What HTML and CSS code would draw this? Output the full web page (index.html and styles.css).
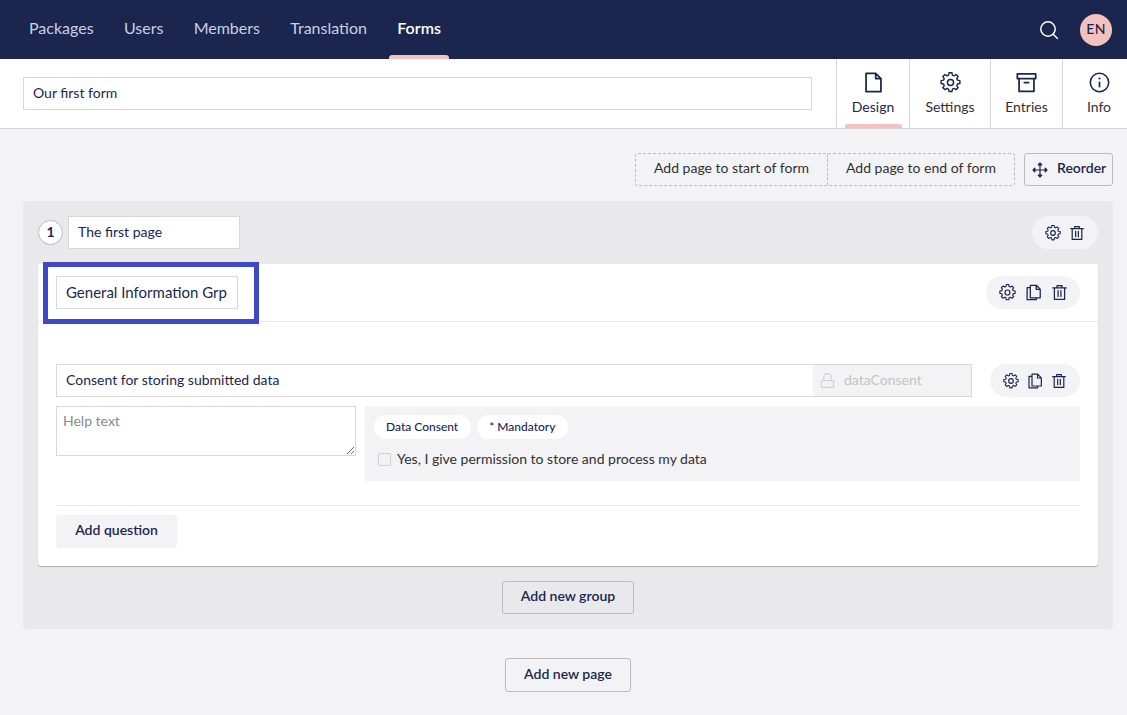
FILE: index.html
```html
<!DOCTYPE html>
<html lang="en">
<head>
<meta charset="utf-8">
<title>Forms</title>
<link rel="stylesheet" href="styles.css">
</head>
<body>
<svg class="defs" width="0" height="0" aria-hidden="true">
  <symbol id="gear" viewBox="0 0 24 24"><path fill="none" stroke="currentColor" stroke-width="1.7" stroke-linejoin="round" d="M10.300 1.800h3.400l.6 2.900 1.800.8 2.500-1.500 2.400 2.400-1.500 2.500.8 1.800 2.900.6v3.400l-2.900.6-.8 1.800 1.500 2.500-2.400 2.400-2.500-1.500-1.800.8-.6 2.900h-3.400l-.6-2.900-1.800-.8-2.500 1.500-2.400-2.400 1.500-2.500-.8-1.800-2.900-.6v-3.400l2.900-.6.8-1.800-1.500-2.500 2.400-2.400 2.500 1.500 1.800-.8z" transform="translate(12 12) scale(.96) translate(-12 -13.500)"/><circle cx="12" cy="12" r="3.500" fill="none" stroke="currentColor" stroke-width="1.700"/></symbol>
  <symbol id="trash" viewBox="0 0 24 24"><path fill="none" stroke="currentColor" stroke-width="1.800" stroke-linecap="round" stroke-linejoin="round" d="M2.500 5.500h19M8.500 5.500V2.300h7v3.200M4.800 5.500v16.200h14.400V5.500M10 9.500v8M14 9.500v8"/></symbol>
  <symbol id="copy" viewBox="0 0 24 24"><path fill="none" stroke="currentColor" stroke-width="1.800" stroke-linecap="round" stroke-linejoin="round" d="M7.500 1.800h8.500l5.500 5.500v12.200h-14zM15.800 2v5.500h5.500M7.500 5H3v17.200h13v-2.700"/></symbol>
</svg>

<header class="topbar">
  <nav class="mainnav">
    <a class="navlink">Packages</a>
    <a class="navlink">Users</a>
    <a class="navlink">Members</a>
    <a class="navlink">Translation</a>
    <a class="navlink navlink-active">Forms</a>
  </nav>
  <div class="topright">
    <svg class="search" viewBox="0 0 20 20"><circle cx="9" cy="9" r="7.200" fill="none" stroke="#fff" stroke-width="1.500"/><path d="M14.200 14.200l4.300 4.300" stroke="#fff" stroke-width="1.500" stroke-linecap="round"/></svg>
    <span class="avatar">EN</span>
  </div>
</header>

<section class="subbar">
  <div class="subbar-main"><div class="field name-field">Our first form</div></div>
  <div class="tabs">
    <div class="tab tab-design tab-active">
      <svg class="tabicon" viewBox="0 0 24 24"><path fill="none" stroke="#1b264f" stroke-width="2" stroke-linejoin="round" stroke-linecap="round" d="M3.500 1.500h11l6 6v15h-17zM14.500 1.800v5.700h5.700"/></svg>
      <span>Design</span>
    </div>
    <div class="tab tab-settings">
      <svg class="tabicon"><use href="#gear"/></svg>
      <span>Settings</span>
    </div>
    <div class="tab tab-entries">
      <svg class="tabicon" viewBox="0 0 24 24"><path fill="none" stroke="#1b264f" stroke-width="2" stroke-linejoin="round" stroke-linecap="round" d="M1.500 2h21v5.500h-21zM3.500 7.500v14.500h17V7.500M9.500 12h5"/></svg>
      <span>Entries</span>
    </div>
    <div class="tab tab-info">
      <svg class="tabicon" viewBox="0 0 24 24"><circle cx="12" cy="12" r="10.500" fill="none" stroke="#1b264f" stroke-width="1.800"/><path d="M12 11v6.500" stroke="#1b264f" stroke-width="2"/><circle cx="12" cy="7.500" r="1.200" fill="#1b264f"/></svg>
      <span>Info</span>
    </div>
  </div>
</section>

<main class="content">
  <div class="toolbar">
    <div class="addpage-group">
      <span class="addpage addpage-start">Add page to start of form</span>
      <span class="addpage addpage-end">Add page to end of form</span>
    </div>
    <div class="btn btn-reorder">
      <svg class="moveicon" viewBox="0 0 16 16"><path fill="none" stroke="#1b264f" stroke-width="1.200" stroke-linejoin="round" d="M8 1v14M1 8h14M6.200 2.800L8 1l1.800 1.800zM6.200 13.200L8 15l1.800-1.800zM2.800 6.200L1 8l1.800 1.800zM13.200 6.200L15 8l-1.800 1.800z"/></svg>
      <span>Reorder</span>
    </div>
  </div>

  <section class="page-panel">
    <div class="page-head">
      <span class="page-num">1</span>
      <div class="field page-title">The first page</div>
      <div class="pill pill-page">
        <svg class="ico"><use href="#gear"/></svg>
        <svg class="ico"><use href="#trash"/></svg>
      </div>
    </div>

    <article class="group-card">
      <div class="group-head">
        <div class="field group-title">General Information Grp</div>
        <div class="pill pill-group">
          <svg class="ico ico-lg"><use href="#gear"/></svg>
          <svg class="ico ico-lg"><use href="#copy"/></svg>
          <svg class="ico ico-lg"><use href="#trash"/></svg>
        </div>
        <div class="highlight"></div>
      </div>
      <div class="group-body">
        <div class="q-row">
          <div class="q-input">
            <span class="q-label">Consent for storing submitted data</span>
            <span class="q-alias">
              <svg class="lock" viewBox="0 0 16 16"><path fill="none" stroke="#d0d0d2" stroke-width="1.300" stroke-linejoin="round" d="M1.500 8h13v7.300h-13zM4 8V4.500a4 3.800 0 0 1 8 0V8"/></svg>
              dataConsent
            </span>
          </div>
          <div class="pill pill-q">
            <svg class="ico"><use href="#gear"/></svg>
            <svg class="ico"><use href="#copy"/></svg>
            <svg class="ico"><use href="#trash"/></svg>
          </div>
        </div>
        <div class="q-detail">
          <textarea class="help" placeholder="Help text"></textarea>
          <div class="preview">
            <div class="chips">
              <span class="chip chip-name">Data Consent</span>
              <span class="chip">* Mandatory</span>
            </div>
            <label class="consent">
              <span class="checkbox"></span>
              <span>Yes, I give permission to store and process my data</span>
            </label>
          </div>
        </div>
        <div class="group-foot">
          <div class="btn-soft">Add question</div>
        </div>
      </div>
    </article>

    <div class="center-row">
      <div class="btn btn-group-add">Add new group</div>
    </div>
  </section>

  <div class="center-row page-add-row">
    <div class="btn btn-page-add">Add new page</div>
  </div>
</main>
</body>
</html>
```

FILE: styles.css
```css
* { box-sizing: border-box; }
html, body { margin: 0; padding: 0; }
body {
  width: 1127px;
  height: 715px;
  overflow: hidden;
  background: #f3f3f5;
  color: #1b264f;
  font: 14px/20px Lato, "Noto Sans", sans-serif;
}
.defs { position: absolute; }

.topbar {
  height: 59px;
  background: #1b264f;
  display: flex;
  justify-content: space-between;
  align-items: center;
  padding: 0 15px 0 29px;
}
.mainnav { display: flex; gap: 30.3px; height: 100%; }
.navlink {
  color: #c9d0e2;
  font-size: 16px;
  line-height: 20px;
  padding-top: 18px;
  position: relative;
}
.navlink-active { color: #fff; font-weight: 600; }
.navlink-active::after {
  content: "";
  position: absolute;
  left: -8px;
  right: -8px;
  bottom: 0;
  height: 4px;
  background: #f5c1bc;
  border-radius: 3px 3px 0 0;
}
.topright { display: flex; align-items: center; gap: 21px; }
.search { width: 20px; height: 20px; display: block; }
.avatar {
  width: 32px;
  height: 32px;
  border-radius: 50%;
  background: #f5c1bc;
  color: #1b264f;
  font-size: 14px;
  font-weight: 500;
  letter-spacing: .3px;
  padding-bottom: 2px;
  display: flex;
  align-items: center;
  justify-content: center;
}

.subbar {
  height: 70px;
  background: #fff;
  border-bottom: 1px solid #d8d7d9;
  display: flex;
  overflow: hidden;
}
.subbar-main { flex: 0 0 836px; padding: 18px 24px 0 23px; }
.field {
  height: 33px;
  background: #fff;
  border: 1px solid #d8d7d9;
  padding: 0 9px 2px;
  display: flex;
  align-items: center;
  font-size: 14px;
  color: #1b264f;
}
.tabs { display: flex; flex: none; }
.tab {
  border-left: 1px solid #d8d7d9;
  height: 69px;
  flex: none;
  position: relative;
  display: flex;
  flex-direction: column;
  align-items: center;
  padding-top: 13px;
  font-size: 14px;
  line-height: 20px;
  color: #303033;
}
.tab-design { width: 73px; color: #1b264f; }
.tab-settings { width: 81px; }
.tab-entries { width: 72px; }
.tab-info { width: 73px; }
.tabicon { width: 21px; height: 21px; color: #1b264f; display: block; margin-bottom: 4px; }
.tab-active::after {
  content: "";
  position: absolute;
  left: 8px;
  right: 7px;
  bottom: 0;
  height: 4px;
  background: #f5c1bc;
  border-radius: 3px 3px 0 0;
}

.content { padding: 24px 14px 0 23px; }
.toolbar { display: flex; justify-content: flex-end; gap: 9px; height: 33px; }
.addpage-group {
  display: flex;
  border: 1px dashed #bbbabf;
  border-radius: 3px;
  height: 33px;
}
.addpage { display: flex; align-items: center; justify-content: center; padding-bottom: 4px; font-size: 14px; color: #303033; }
.addpage-start { width: 192px; border-right: 1px dashed #bbbabf; }
.addpage-end { width: 186px; }
.btn {
  border: 1px solid #bbbabf;
  border-radius: 3px;
  background: transparent;
  display: flex;
  align-items: center;
  justify-content: center;
  padding-bottom: 4px;
  font-weight: 600;
  color: #1b264f;
}
.btn-reorder { width: 89px; gap: 9px; justify-content: flex-start; padding: 0 0 0 7px; }
.btn-reorder span { padding-bottom: 4px; }
.moveicon { width: 16px; height: 16px; display: block; }

.page-panel {
  margin-top: 15px;
  height: 428px;
  background: #e9e9eb;
  padding: 15px 15px 0;
  border-radius: 2px;
}
.page-head { display: flex; align-items: center; height: 33px; }
.page-num {
  width: 25px;
  height: 25px;
  border-radius: 50%;
  background: #fff;
  border: 1px solid #bbbabf;
  padding-bottom: 1px;
  display: flex;
  align-items: center;
  justify-content: center;
  font-weight: 700;
  font-size: 14px;
  color: #1b264f;
}
.page-title { width: 172px; margin-left: 5px; }
.pill {
  height: 33px;
  border-radius: 17px;
  background: #f3f3f5;
  display: flex;
  align-items: center;
  color: #1b264f;
}
.pill-page { margin-left: auto; width: 66px; padding-left: 13px; gap: 8px; }
.pill-group { margin-left: auto; width: 94px; padding-left: 13px; gap: 9px; }
.pill-q { width: 90px; margin-left: auto; padding-left: 13px; gap: 8px; }
.ico { width: 16px; height: 16px; display: block; }
.ico-lg { width: 17px; height: 17px; }

.group-card {
  margin-top: 15px;
  height: 302px;
  background: #fff;
  border-radius: 3px;
  box-shadow: 0 1px 1px rgba(0,0,0,.25);
}
.group-head {
  height: 58px;
  border-bottom: 1px solid #e9e9eb;
  padding: 12px 18px 0 18px;
  display: flex;
  align-items: flex-start;
  position: relative;
}
.group-title { width: 182px; font-size: 15px; }
.highlight {
  position: absolute;
  left: 5px;
  top: -2px;
  width: 216px;
  height: 62px;
  border: 5px solid #3f48c8;
}
.group-body { padding: 42px 18px 0; }
.q-row { display: flex; height: 33px; }
.q-input {
  width: 916px;
  height: 33px;
  border: 1px solid #d8d7d9;
  display: flex;
  align-items: center;
  justify-content: space-between;
  padding-left: 9px;
  font-size: 14px;
}
.q-label { padding-bottom: 2px; }
.q-alias {
  width: 158px;
  height: 31px;
  background: #f3f3f5;
  color: #c4c4c7;
  display: flex;
  align-items: center;
  gap: 9px;
  padding: 0 0 2px 7px;
}
.lock { width: 15px; height: 15px; display: block; margin-top: 1px; }
.q-detail { display: flex; gap: 9px; margin-top: 9px; align-items: flex-start; }
.help {
  display: block;
  width: 300px;
  height: 50px;
  border: 1px solid #d8d7d9;
  border-radius: 0;
  padding: 4px 6px;
  font: 14px/20px Lato, "Noto Sans", sans-serif;
  color: #303033;
  background: #fff;
  margin: 0;
  outline: 0;
}
.help::placeholder { color: #8a8a8e; opacity: 1; }
.preview {
  flex: 1;
  height: 75px;
  background: #f3f3f5;
  padding: 9px 9px 0;
}
.chips { display: flex; gap: 6px; }
.chip {
  height: 24px;
  padding: 0 12px;
  background: #fff;
  border-radius: 12px;
  display: flex;
  align-items: center;
  font-size: 12px;
  font-weight: 500;
  color: #1b264f;
}
.chip-name { padding: 0 13px 0 12px; }
.consent { display: flex; align-items: center; gap: 6px; margin-top: 10px; padding-left: 4px; font-size: 14px; color: #303033; }
.checkbox {
  width: 13px;
  height: 13px;
  border: 1px solid #d0d0d3;
  border-radius: 2px;
  background: #f3f3f5;
}
.group-foot { margin-top: 24px; border-top: 1px solid #e9e9eb; padding-top: 9px; }
.btn-soft {
  width: 121px;
  height: 33px;
  background: #f3f3f5;
  border-radius: 3px;
  font-weight: 600;
  padding-bottom: 4px;
  display: flex;
  align-items: center;
  justify-content: center;
  color: #1b264f;
}
.center-row { display: flex; justify-content: center; margin-top: 15px; }
.btn-group-add { width: 132px; height: 33px; }
.page-add-row { margin-top: 29px; }
.btn-page-add { width: 126px; height: 34px; padding-bottom: 2px; }
```
